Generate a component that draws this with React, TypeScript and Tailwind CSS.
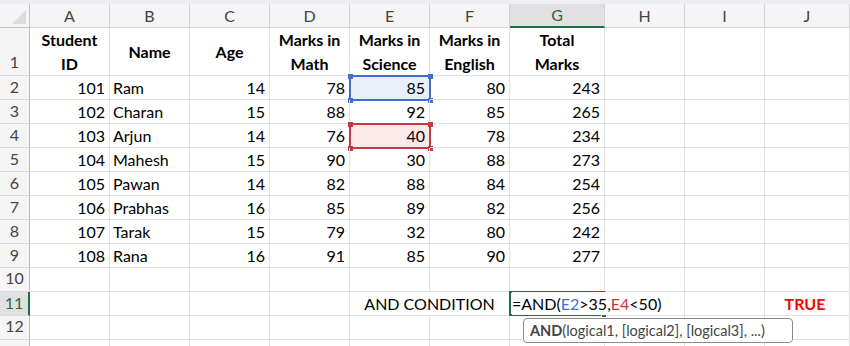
const cols = ["A", "B", "C", "D", "E", "F", "G", "H", "I", "J"];
const widths = ["w-[80px]", "w-[80px]", "w-[80px]", "w-[80px]", "w-[80px]", "w-[80px]", "w-[95px]", "w-[80px]", "w-[80px]", "w-[85px]"];

const students = [
  [101, "Ram", 14, 78, 85, 80, 243],
  [102, "Charan", 15, 88, 92, 85, 265],
  [103, "Arjun", 14, 76, 40, 78, 234],
  [104, "Mahesh", 15, 90, 30, 88, 273],
  [105, "Pawan", 14, 82, 88, 84, 254],
  [106, "Prabhas", 16, 85, 89, 82, 256],
  [107, "Tarak", 15, 79, 32, 80, 242],
  [108, "Rana", 16, 91, 85, 90, 277],
];

const headers = ["Student ID", "Name", "Age", "Marks in Math", "Marks in Science", "Marks in English", "Total Marks"];

function Corner({ pos, color }: { pos: string; color: string }) {
  return <span className={`absolute w-[5px] h-[5px] ${pos} ${color}`} />;
}

function Selection({ border, bg, square }: { border: string; bg: string; square: string }) {
  return (
    <div className={`absolute -left-px -top-px w-[82px] h-[26px] border-2 ${border} ${bg}`}>
      <Corner pos="-left-[3.5px] -top-[3.5px]" color={square} />
      <Corner pos="-right-[3.5px] -top-[3.5px]" color={square} />
      <Corner pos="-left-[3.5px] -bottom-[3.5px]" color={square} />
      <Corner pos="-right-[3.5px] -bottom-[3.5px]" color={square} />
    </div>
  );
}

function RowHead({ n, h = "h-[24px]", active = false }: { n?: number; h?: string; active?: boolean }) {
  return (
    <div
      className={`w-[30px] ${h} shrink-0 flex items-end justify-center pb-[1px] border-b border-[#dadada] text-[16px] ${
        active ? "bg-[#e1e1e1] text-[#1e6b43] border-r-2 border-r-[#1e7145]" : "bg-[#f5f5f5] text-[#444] border-r border-r-[#bdbdbd]"
      }`}
    >
      {n}
    </div>
  );
}

function Cell({ w, children, className = "" }: { w: string; children?: React.ReactNode; className?: string }) {
  return <div className={`${w} h-[24px] shrink-0 border-r border-b border-[#e1e1e1] relative ${className}`}>{children}</div>;
}

export default function App() {
  return (
    <div className="w-[850px] h-[346px] overflow-hidden bg-white text-black" style={{ fontFamily: "Lato, 'Liberation Sans', sans-serif" }}>
      <div className="h-[4px] bg-[#eceef2]" />
      {/* column letters */}
      <div className="flex h-[24px]">
        <div className="w-[30px] shrink-0 bg-[#f5f5f5] border-r border-b border-[#c6c6c6] relative">
          <div className="absolute right-[3px] bottom-[3px] w-0 h-0 border-l-[14px] border-l-transparent border-b-[14px] border-b-[#dcdcdc]" />
        </div>
        {cols.map((c, i) =>
          c === "G" ? (
            <div key={c} className={`${widths[i]} shrink-0 flex items-center justify-center bg-[#e1e1e1] border-r border-[#d4d4d4] border-b-2 border-b-[#1e7145] text-[#1e6b43] text-[16px]`}>
              {c}
            </div>
          ) : (
            <div key={c} className={`${widths[i]} shrink-0 flex items-center justify-center bg-[#f5f5f5] border-r border-b border-[#d4d4d4] text-[#444] text-[16px]`}>
              {c}
            </div>
          )
        )}
      </div>
      {/* row 1 headers */}
      <div className="flex h-[48px]">
        <RowHead n={1} h="h-[48px]" />
        {cols.map((c, i) => (
          <div
            key={c}
            className={`${widths[i]} h-[48px] shrink-0 border-r border-b border-[#e1e1e1] flex items-center justify-center text-center font-bold text-[16px] leading-[24px] px-[2px]`}
          >
            {headers[i] ? (
              <span className={i === 0 || i === 6 ? "block w-[60px]" : "block"}>{headers[i]}</span>
            ) : null}
          </div>
        ))}
      </div>
      {students.map((s, r) => (
        <div key={r} className="flex h-[24px] text-[16px] leading-[23px]">
          <RowHead n={r + 2} />
          {cols.map((c, i) => {
            const v = s[i];
            const sel =
              r === 0 && i === 4 ? (
                <Selection border="border-[#3f6fc6]" bg="bg-[#e9eff9]" square="bg-[#3f6fc6]" />
              ) : r === 2 && i === 4 ? (
                <Selection border="border-[#c23a41]" bg="bg-[#fbe9ea]" square="bg-[#c23a41]" />
              ) : null;
            return (
              <Cell key={c} w={widths[i]} className={i === 1 ? "text-left pl-[3px]" : "text-right pr-[4px]"}>
                {sel}
                <span className="relative">{v ?? ""}</span>
              </Cell>
            );
          })}
        </div>
      ))}
      {/* row 10 */}
      <div className="flex h-[24px]">
        <RowHead n={10} />
        {cols.map((c, i) => (
          <Cell key={c} w={widths[i]} />
        ))}
      </div>
      {/* row 11 */}
      <div className="flex h-[24px] text-[16px] leading-[23px]">
        <RowHead n={11} active />
        {cols.slice(0, 4).map((c, i) => (
          <Cell key={c} w={widths[i]} />
        ))}
        <div className="w-[160px] h-[24px] shrink-0 border-r border-b border-[#e1e1e1] text-center">AND CONDITION</div>
        <div className="w-[95px] h-[24px] shrink-0 border-b border-[#e1e1e1] relative z-10">
          <div className="absolute -left-px -top-px w-[96px] h-[25px] border-2 border-[#1e7145]">
            <span className="absolute -right-[4px] -bottom-[4px] w-[6px] h-[6px] bg-[#1e7145] border border-white" />
          </div>
          <div className="absolute left-[2px] top-0 whitespace-nowrap bg-white pr-[2px]">
            =AND(<span className="text-[#3d6fcf]">E2</span>&gt;35,<span className="text-[#c8363e]">E4</span>&lt;50)
          </div>
        </div>
        <Cell w={widths[7]} />
        <Cell w={widths[8]} />
        <Cell w={widths[9]} className="text-center font-bold text-[#ff0000] pr-[4px]">TRUE</Cell>
      </div>
      {/* row 12 */}
      <div className="flex h-[24px] relative">
        <RowHead n={12} />
        {cols.map((c, i) => (
          <Cell key={c} w={widths[i]} />
        ))}
        <div className="absolute left-[523px] top-[2px] h-[25px] w-[270px] bg-white border border-[#8a8a8a] rounded-[4px] z-20 pl-[6px] text-[14.5px] leading-[23px] text-[#444] whitespace-nowrap">
          <b>AND</b>(logical1, [logical2], [logical3], ...)
        </div>
      </div>
      {/* partial row 13 */}
      <div className="flex h-[24px]">
        <RowHead />
        {cols.map((c, i) => (
          <Cell key={c} w={widths[i]} />
        ))}
      </div>
    </div>
  );
}
